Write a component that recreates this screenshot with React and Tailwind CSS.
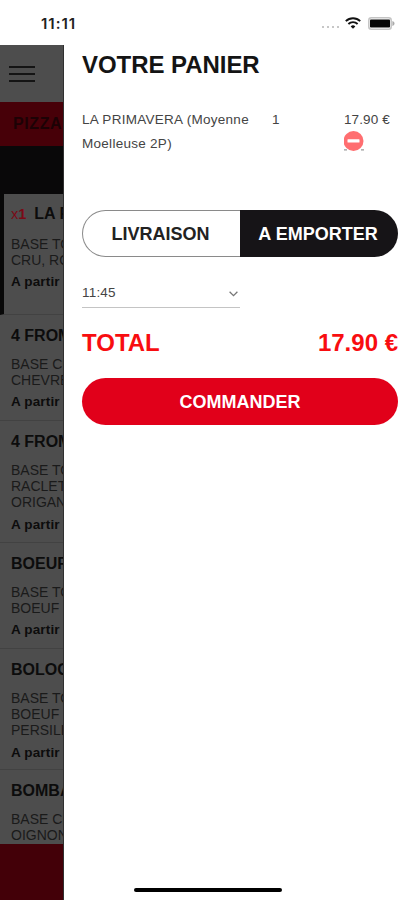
const PIZZAS = [
  { name: 'LA PRIMAVERA', qty: 'x1', lines: ['BASE TOMATE', 'CRU, ROQUETTE'], height: 'h-[121px]', selected: true },
  { name: '4 FROMAGES', lines: ['BASE CREME', 'CHEVRE, BLEU'], height: 'h-[106px]' },
  { name: '4 FROMAGES', lines: ['BASE TOMATE', 'RACLETTE', 'ORIGAN'], height: 'h-[122px]' },
  { name: 'BOEUF', lines: ['BASE TOMATE', 'BOEUF'], height: 'h-[106px]' },
  { name: 'BOLOGNAISE', lines: ['BASE TOMATE', 'BOEUF', 'PERSILLADE'], height: 'h-[121px]' },
  { name: 'BOMBAY', lines: ['BASE CREME', 'OIGNONS'], height: 'h-[106px]' },
];

function StatusBar() {
  return (
    <div className="flex h-[45px] shrink-0 items-start justify-between bg-white pl-[41px] pr-[20px] pt-[13px]">
      <span className="font-['Inter',sans-serif] text-[15px] font-semibold leading-[21px] tracking-[1px] text-[#222]">11:11</span>
      <div className="flex h-[20px] items-center">
        <div className="mr-[6px] mt-[8px] flex gap-[3px]">
          <i className="size-[2px] rounded-full bg-[#b5b5b5]" />
          <i className="size-[2px] rounded-full bg-[#b5b5b5]" />
          <i className="size-[2px] rounded-full bg-[#b5b5b5]" />
          <i className="size-[2px] rounded-full bg-[#b5b5b5]" />
        </div>
        <svg width="16" height="12" viewBox="0 0 16 12" fill="none" stroke="#111" strokeWidth="1.9">
          <path d="M0.8 4.1a10.4 10.4 0 0 1 14.4 0" />
          <path d="M3.4 7a6.6 6.6 0 0 1 9.2 0" />
          <path d="M8 11.8 5.7 9.4a3.3 3.3 0 0 1 4.6 0z" fill="#111" stroke="none" />
        </svg>
        <svg className="ml-[7px]" width="27" height="13" viewBox="0 0 27 13">
          <rect x="0.8" y="0.8" width="22.4" height="11.4" rx="2.5" fill="#fff" stroke="#c4c4c4" strokeWidth="1.5" />
          <rect x="2" y="2.4" width="20" height="8.2" rx="0.8" fill="#050505" />
          <path d="M24.4 4c2.8.8 2.8 4.2 0 5z" fill="#aaa" />
        </svg>
      </div>
    </div>
  );
}

function Pizza({ pizza }) {
  return (
    <div
      className={`${pizza.height} shrink-0 overflow-hidden whitespace-nowrap border-b border-[#424242] ${
        pizza.selected ? 'border-l-4 border-l-[#080808] pl-[7px] pt-[10px]' : 'pl-[11px] pt-[11px]'
      }`}
    >
      <h3 className="h-[20px] text-[16px] font-bold leading-[20px] text-[#0c0c0c]">
        {pizza.qty && (
          <span className="mr-[8px] text-[14.5px] text-[#7a0a17]">
            <span className="font-normal">x</span>1
          </span>
        )}
        {pizza.name}
      </h3>
      <div className={`text-[14px] leading-[16.2px] text-[#1a1a1a] ${pizza.selected ? 'mt-[12px]' : 'mt-[10px]'}`}>
        {pizza.lines.map((line) => (
          <p key={line}>{line}</p>
        ))}
      </div>
      <p className="mt-[4px] text-[13.5px] font-bold leading-[20px] tracking-[0.15px] text-[#0c0c0c]">A partir</p>
    </div>
  );
}

function Menu() {
  return (
    <div className="flex w-[64px] shrink-0 flex-col overflow-hidden border-r border-[#303030] bg-[#4d4d4d]">
      <div className="flex h-[57px] shrink-0 items-center pl-[9px]">
        <div className="flex w-[26px] flex-col gap-[5px]">
          <i className="h-[2px] bg-[#141414]" />
          <i className="h-[2px] bg-[#141414]" />
          <i className="h-[2px] bg-[#141414]" />
        </div>
      </div>
      <div className="h-[44px] shrink-0 whitespace-nowrap bg-[#470008] pl-[13px] text-[16px] font-bold leading-[44px] tracking-[0.6px] text-[#1c0205]">
        PIZZAS
      </div>
      <div className="h-[48px] shrink-0 bg-[#090809]" />
      <div className="flex min-h-0 flex-1 flex-col overflow-hidden">
        {PIZZAS.map((pizza, i) => (
          <Pizza key={i} pizza={pizza} />
        ))}
      </div>
      <div className="h-[56px] shrink-0 bg-[#430008]" />
    </div>
  );
}

function Cart() {
  return (
    <div className="flex flex-1 flex-col bg-white pl-[18px] pr-[17px]">
      <h1 className="mt-[4px] h-[32px] whitespace-nowrap text-[24px] font-bold leading-[32px] tracking-[-0.05px] text-[#141414]">VOTRE PANIER</h1>

      <div className="mt-[27px] flex h-[48px] text-[13.5px] leading-[24px] tracking-[0.28px] text-[#444]">
        <p className="w-[190px] whitespace-nowrap">
          LA PRIMAVERA (Moyenne
          <br />
          Moelleuse 2P)
        </p>
        <p className="w-[72px]">1</p>
        <div className="whitespace-nowrap">
          <p className="tracking-[0.1px]">17.90 €</p>
          <svg className="-mt-px" width="20" height="20" viewBox="0 0 20 20">
            <path d="M0 18.8h3M17 18.8h3" stroke="#999" strokeWidth="1.2" />
            <circle cx="9.5" cy="10" r="10" fill="#ff6e70" />
            <rect x="3.5" y="8.2" width="12" height="3.4" rx="0.6" fill="#fff" />
          </svg>
        </div>
      </div>

      <div className="mt-[54px] flex h-[47px] text-[18px] font-bold">
        <button className="w-[158px] rounded-l-full border border-r-0 border-[#8a8a8a] pr-[2px] pt-[2px] text-[#222]">LIVRAISON</button>
        <button className="flex-1 rounded-r-full bg-[#161417] pr-[2px] pt-[2px] text-white">A EMPORTER</button>
      </div>

      <div className="mt-[21px] flex h-[30px] w-[158px] items-center justify-between border-b border-[#c4c4c4] pr-[2px] pt-[2px] text-[13.5px] tracking-[0.2px] text-[#444]">
        <span>11:45</span>
        <svg width="9" height="6" viewBox="0 0 9 6" fill="none" stroke="#777" strokeWidth="1.3">
          <path d="M0.6 0.8 4.5 4.7 8.4 0.8" />
        </svg>
      </div>

      <div className="mt-[20px] flex h-[30px] justify-between text-[24px] font-bold leading-[30px] text-[#f80d10]">
        <span>TOTAL</span>
        <span>17.90 €</span>
      </div>

      <button className="mt-[20px] h-[47px] rounded-full bg-[#e1001a] pt-[2px] text-[18px] font-bold text-white">COMMANDER</button>

      <div className="mb-[8px] ml-[52px] mt-auto h-[4px] w-[148px] rounded-full bg-black" />
    </div>
  );
}

export default function App() {
  return (
    <div className="flex h-[900px] w-[415px] flex-col overflow-hidden bg-white font-['Liberation_Sans',Arial,sans-serif]">
      <StatusBar />
      <div className="flex min-h-0 flex-1">
        <Menu />
        <Cart />
      </div>
    </div>
  );
}
